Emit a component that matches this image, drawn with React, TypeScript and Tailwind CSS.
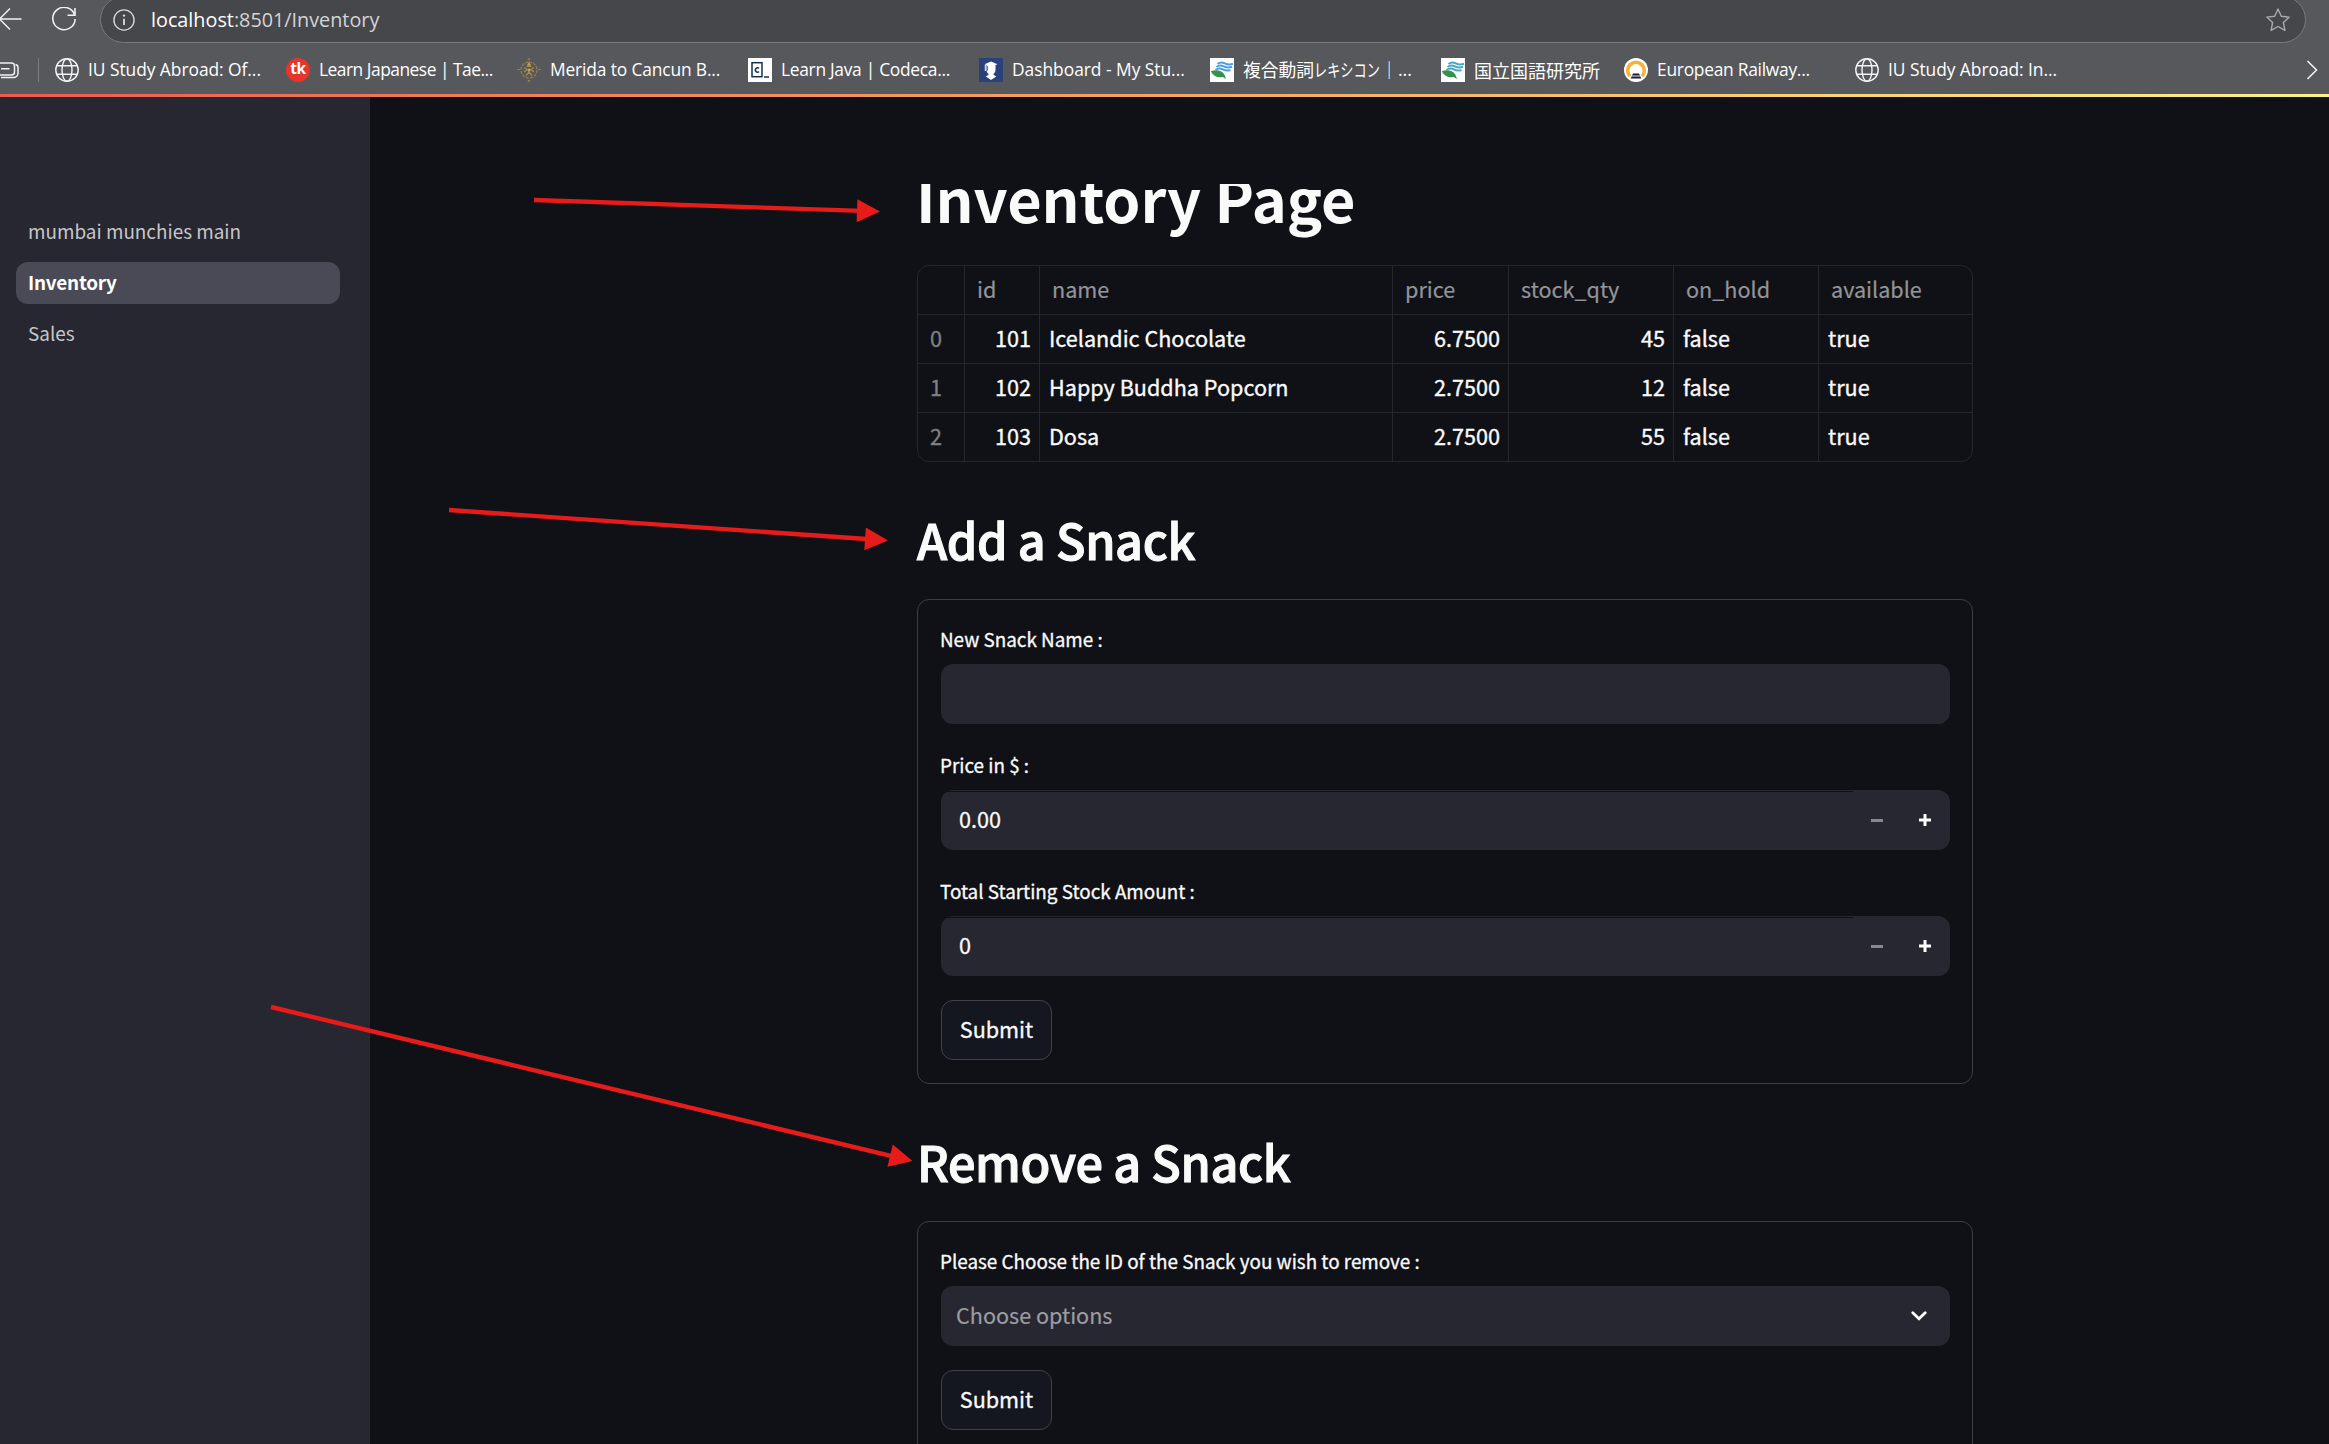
import type { ReactNode } from "react";

/* ---------- Browser chrome ---------- */

function GlobeIcon() {
  return (
    <svg viewBox="0 0 24 24" className="size-6 shrink-0" fill="none" stroke="#f4f4f5" strokeWidth="1.4">
      <circle cx="12" cy="12" r="11.2" />
      <ellipse cx="12" cy="12" rx="5" ry="11.2" />
      <path d="M2 7.8h20M2 16.2h20" />
    </svg>
  );
}

function TaeKimIcon() {
  return (
    <div className="flex size-6 shrink-0 items-center justify-center rounded-full bg-[#e8352b] pb-[2px] font-['Open_Sans',sans-serif] text-[15.5px] leading-none font-bold tracking-tight text-white">
      tk
    </div>
  );
}

function CompassIcon() {
  return (
    <svg viewBox="0 0 24 24" className="size-6 shrink-0" fill="none" stroke="#a98a45" strokeWidth="1.2">
      <circle cx="12" cy="12" r="8" strokeDasharray="3 1.2" opacity="0.8" />
      <path d="M12 4.5l1.8 4h-3.600zM9 11.500h6M7 9.500l3 2-3 2.500M17 9.500l-3 2 3 2.500M12 11v3M9 17.500l3-3.500 3 3.500" />
      <circle cx="12" cy="6.500" r="1.300" fill="#c9a24a" stroke="none" />
      <circle cx="12" cy="12" r="1.500" fill="#c9a24a" stroke="none" />
      <path d="M10.800 1.200h2.400M10.800 22.800h2.400M.6 11.500h2M21.400 11.500h2" />
    </svg>
  );
}

function CodecademyIcon() {
  return (
    <svg viewBox="0 0 24 24" className="size-6 shrink-0">
      <rect width="24" height="24" fill="#fff" />
      <rect x="4" y="4.700" width="10" height="14" fill="none" stroke="#14304a" strokeWidth="1.500" />
      <path d="M11 10.300a2.200 2.200 0 1 0 0 3.400" fill="none" stroke="#14304a" strokeWidth="1.500" />
      <path d="M16 19h5" stroke="#14304a" strokeWidth="1.500" />
    </svg>
  );
}

function GraduateIcon() {
  return (
    <svg viewBox="0 0 24 24" className="size-6 shrink-0">
      <rect width="24" height="24" fill="#2a427c" />
      <path d="M5.500 6.200L12 3.500l6.500 2.700-2 .8v4.500c0 2.500-1.200 3.800-2 4.300v1l2.700 1.800L12 22l-5.200-3.400 2.700-1.800v-1c-.8-.5-2-1.800-2-4.300V7z" fill="#fff" />
      <path d="M6.300 7v6" stroke="#fff" strokeWidth="1" />
      <path d="M8.600 8v4.500" stroke="#2a427c" strokeWidth=".8" />
    </svg>
  );
}

function LeafWaveIcon({ wave }: { wave: string }) {
  return (
    <svg viewBox="0 0 24 24" className="size-6 shrink-0">
      <rect width="24" height="24" fill="#fff" />
      <g fill="none" stroke={wave} strokeWidth="2">
        <path d="M7.500 6c3-2.500 5-1.800 7.300-.6S20 7 23 5.800" />
        <path d="M6.500 9c3-2.500 5-1.800 7.300-.6S19 10 22 8.800" />
        <path d="M5.500 12c3-2.500 5-1.800 7.300-.6S18 13 20.500 12" />
      </g>
      <path d="M.8 13.200c5-1.800 11-1 13.500 3.300.8 1.400 1.300 3 1.600 4.800-1-1.200-2-2-3-2.400C8 20 3.500 18.500.8 13.200z" fill="#36914a" />
    </svg>
  );
}

function RailwayIcon() {
  return (
    <svg viewBox="0 0 24 24" className="size-6 shrink-0">
      <circle cx="12" cy="12" r="12" fill="#fff" />
      <path d="M6 18.300a8.300 8.300 0 1 1 12 0" fill="none" stroke="#f2b43a" strokeWidth="3.600" />
      <path d="M9 15.500h6l2.300 5H6.700z" fill="#1d1b3a" />
      <path d="M7.500 18h9" stroke="#fff" strokeWidth=".9" />
    </svg>
  );
}

function Bookmark({ icon, className, children }: { icon: ReactNode; className: string; children: ReactNode }) {
  return (
    <div className="flex shrink-0 items-center gap-[9px]">
      {icon}
      <span className={className}>{children}</span>
    </div>
  );
}

function BrowserChrome() {
  return (
    <header className="h-[94px] shrink-0 overflow-hidden bg-[#57585c] font-['Open_Sans',sans-serif] text-white">
      <div className="-mt-1 flex h-12 items-start">
        <svg viewBox="0 0 24 24" className="mt-[11px] -ml-[2px] size-6 shrink-0" fill="none" stroke="#f0f0f1" strokeWidth="1.500">
          <path d="M23.500 12H1.500M12 1.500L1.500 12 12 22.500" />
        </svg>
        <svg viewBox="0 0 24 24" className="mt-[11px] ml-[30px] size-6 shrink-0" fill="none" stroke="#f0f0f1" strokeWidth="1.600">
          <path d="M22.800 8.500A11.200 11.200 0 1 0 23.200 12M23 1v7.300h-7.500" />
        </svg>
        <div className="ml-6 flex h-[47px] w-[2206px] items-center rounded-full border border-[#797a7e] bg-[#46474a] pl-[12px] pr-[15px]">
          <svg viewBox="0 0 24 24" className="size-[22px] shrink-0" fill="none" stroke="#d9d9da" strokeWidth="1.500">
            <circle cx="12" cy="12" r="11" />
            <path d="M12 10.500v7" strokeWidth="2" />
            <circle cx="12" cy="7.200" r="1.300" fill="#d9d9da" stroke="none" />
          </svg>
          <span className="ml-4 text-[19.800px] leading-none text-[#d4d4d6]">
            <span className="text-white">localhost</span>:8501/Inventory
          </span>
          <svg viewBox="0 0 24 24" className="ml-auto size-6" fill="none" stroke="#a8a9ac" strokeWidth="1.400" strokeLinejoin="round">
            <path d="M12 1l3.300 7.200 7.900.9-5.800 5.400 1.500 7.900L12 18.500l-6.900 3.900 1.500-7.900L.8 9.100l7.900-.9z" />
          </svg>
        </div>
      </div>
      <div className="flex h-13 items-center">
        <svg viewBox="0 0 20 20" className="size-5 shrink-0" fill="none" stroke="#f0f0f1" strokeWidth="1.500">
          <path d="M-4 3h15.500a3 3 0 0 1 3 3v6a3 3 0 0 1-3 3H-4M1 8.800h8.500" />
          <path d="M15.500 4.500a3 3 0 0 1 2.500 3V13a4.500 4.500 0 0 1-4.500 4.500H1" />
        </svg>
        <div className="ml-[18px] h-6 w-px bg-[#7b7c80]" />
        <div className="ml-4 grid flex-1 grid-cols-[231px_231px_231px_231px_231px_231px_183px_231px_231px] text-[17.400px] leading-none whitespace-nowrap">
          <Bookmark icon={<GlobeIcon />} className="tracking-[-0.050px]">IU Study Abroad: Of...</Bookmark>
          <Bookmark icon={<TaeKimIcon />} className="tracking-[-0.500px]">Learn Japanese | Tae...</Bookmark>
          <Bookmark icon={<CompassIcon />} className="tracking-[-0.150px]">Merida to Cancun B...</Bookmark>
          <Bookmark icon={<CodecademyIcon />} className="tracking-[-0.300px]">Learn Java | Codeca...</Bookmark>
          <Bookmark icon={<GraduateIcon />} className="tracking-[-0.030px]">Dashboard - My Stu...</Bookmark>
          <Bookmark icon={<LeafWaveIcon wave="#4a9fe6" />} className="flex items-center font-['Noto_Sans_CJK_JP',sans-serif] text-[17.800px]">
            複合動詞
            <span className="inline-block w-[66px] origin-left scale-x-[0.740]">レキシコン</span>
            ｜<span className="font-['Open_Sans',sans-serif]">...</span>
          </Bookmark>
          <Bookmark icon={<LeafWaveIcon wave="#45a8c4" />} className="font-['Noto_Sans_CJK_JP',sans-serif] text-[18px]">国立国語研究所</Bookmark>
          <Bookmark icon={<RailwayIcon />} className="tracking-[-0.270px]">European Railway...</Bookmark>
          <Bookmark icon={<GlobeIcon />} className="tracking-[-0.050px]">IU Study Abroad: In...</Bookmark>
        </div>
        <svg viewBox="0 0 12 20" className="mr-[11px] h-5 w-3 shrink-0" fill="none" stroke="#f0f0f1" strokeWidth="1.600">
          <path d="M1.500 1l9 9-9 9" />
        </svg>
      </div>
    </header>
  );
}

/* ---------- Sidebar ---------- */

function Sidebar() {
  return (
    <nav className="flex w-[370px] shrink-0 flex-col gap-[9px] bg-[#262730] px-4 pt-[114px] text-[18.900px] leading-none text-[#c6c6c9]">
      <a className="flex h-[42px] items-center px-3 pb-[2px]">mumbai munchies main</a>
      <a className="mr-[14px] flex h-[42px] items-center rounded-xl bg-[#494a55] px-3 pb-[2px] font-bold tracking-[-0.250px] text-white">
        Inventory
      </a>
      <a className="flex h-[42px] items-center px-3 pb-[2px]">Sales</a>
    </nav>
  );
}

/* ---------- Inventory table ---------- */

const columns = ["", "id", "name", "price", "stock_qty", "on_hold", "available"];
const snacks = [
  ["0", "101", "Icelandic Chocolate", "6.7500", "45", "false", "true"],
  ["1", "102", "Happy Buddha Popcorn", "2.7500", "12", "false", "true"],
  ["2", "103", "Dosa", "2.7500", "55", "false", "true"],
];
const numeric = new Set([1, 3, 4]);

function InventoryTable() {
  return (
    <div className="h-[197px] overflow-hidden rounded-xl border border-[#26272c] text-[21.600px] leading-none">
      <div className="grid h-[49px] grid-cols-[47px_75px_353px_116px_165px_145px_153px] border-b border-[#26272c] text-[#939498] [-webkit-text-stroke:0.2px_currentColor]">
        {columns.map((c, i) => (
          <div key={i} className="flex items-center border-r border-[#26272c] pb-[2px] pl-3 last:border-r-0">
            {c}
          </div>
        ))}
      </div>
      {snacks.map((row) => (
        <div key={row[0]} className="grid h-[49px] grid-cols-[47px_75px_353px_116px_165px_145px_153px] border-b border-[#26272c]">
          {row.map((v, i) => (
            <div
              key={i}
              className={
                "flex items-center border-r border-[#26272c] pb-[2px] last:border-r-0 [-webkit-text-stroke:0.35px_currentColor] " +
                (i === 0 ? "pl-3 text-[#7f8084]" : numeric.has(i) ? "justify-end pr-[8px] text-[#fafafa]" : "pl-[9px] text-[#fafafa]")
              }
            >
              {v}
            </div>
          ))}
        </div>
      ))}
    </div>
  );
}

/* ---------- Form pieces ---------- */

function Label({ children }: { children: ReactNode }) {
  return (
    <label className="-ml-px block h-[42px] text-[18.850px] leading-[33px] text-[#fafafa] [-webkit-text-stroke:0.3px_currentColor]">
      {children}
    </label>
  );
}

function NumberField({ label, value }: { label: string; value: string }) {
  return (
    <div>
      <Label>{label}</Label>
      <div className="flex h-[60px] overflow-hidden rounded-xl bg-[#262730]">
        <div className="flex w-[912px] flex-col pt-px">
          <div className="h-px bg-[#101116]" />
          <div className="flex flex-1 items-center pb-1 pl-[18px] text-[21.600px] leading-none [-webkit-text-stroke:0.3px_currentColor]">
            {value}
          </div>
        </div>
        <div className="flex w-12 items-center justify-center">
          <div className="h-[3px] w-3 bg-[#858795]" />
        </div>
        <div className="flex w-12 items-center justify-center">
          <svg viewBox="0 0 12 12" className="size-3" stroke="#fff" strokeWidth="3">
            <path d="M0 6h12M6 0v12" />
          </svg>
        </div>
      </div>
    </div>
  );
}

function SubmitButton() {
  return (
    <button className="flex h-[60px] w-[111px] items-center justify-center rounded-xl border border-[#42434a] bg-[#141720] pb-[2px] text-[21.600px] leading-none text-[#fafafa] [-webkit-text-stroke:0.3px_currentColor]">
      Submit
    </button>
  );
}

function SectionHeading({ children }: { children: ReactNode }) {
  return (
    <h2 className="h-[137px] pt-[47px] text-[48.600px] leading-[60px] font-medium tracking-[-0.380px] text-[#fafafa] [-webkit-text-stroke:1.1px_#fafafa]">
      {children}
    </h2>
  );
}

/* ---------- Annotation arrows ---------- */

const arrows = [
  { x1: 534, y1: 200, x2: 880, y2: 211.5 },
  { x1: 449, y1: 510, x2: 888, y2: 540.5 },
  { x1: 271, y1: 1007, x2: 912.5, y2: 1161 },
];

function Arrows() {
  return (
    <svg viewBox="0 0 2329 1444" className="pointer-events-none absolute inset-0 h-full w-full">
      {arrows.map((a) => {
        const length = Math.hypot(a.x2 - a.x1, a.y2 - a.y1);
        const angle = (Math.atan2(a.y2 - a.y1, a.x2 - a.x1) * 180) / Math.PI;
        return (
          <g key={a.y1} transform={`translate(${a.x1} ${a.y1}) rotate(${angle})`} fill="#e81b1b">
            <rect x="0" y="-2.200" width={length - 18} height="4.400" />
            <polygon points={`${length},0 ${length - 23},-11.400 ${length - 23},11.400`} />
          </g>
        );
      })}
    </svg>
  );
}

export default function App() {
  return (
    <div className="relative flex h-[1444px] w-[2329px] flex-col overflow-hidden bg-[#101116] font-['Noto_Sans_CJK_JP',sans-serif] text-[#fafafa]">
      <BrowserChrome />
      <div className="h-[3px] shrink-0 bg-linear-to-r from-[#ee5a50] via-[#f3a566] to-[#fbf285]" />
      <div className="flex min-h-0 flex-1">
        <Sidebar />
        <main className="flex-1 overflow-hidden pt-[87px] pl-[547px]">
          <div className="w-[1056px]">
            <div className="h-[81px] overflow-hidden">
              <h1 className="-mt-[17px] -ml-px text-[59.400px] leading-[60px] font-bold tracking-[-0.080px]">Inventory Page</h1>
            </div>
            <InventoryTable />

            <SectionHeading>Add a Snack</SectionHeading>
            <form className="flex flex-col gap-6 rounded-xl border border-[#3d3e43] pt-[22px] pr-[22px] pb-[23px] pl-[23px]">
              <div>
                <Label>New Snack Name :</Label>
                <div className="h-[60px] rounded-xl bg-[#262730]" />
              </div>
              <NumberField label="Price in $ :" value="0.00" />
              <NumberField label="Total Starting Stock Amount :" value="0" />
              <SubmitButton />
            </form>

            <SectionHeading>Remove a Snack</SectionHeading>
            <form className="flex h-[485px] flex-col gap-6 rounded-xl border border-[#3d3e43] pt-[22px] pr-[22px] pl-[23px]">
              <div>
                <Label>Please Choose the ID of the Snack you wish to remove :</Label>
                <div className="flex h-[60px] items-center justify-between rounded-xl bg-[#262730] pr-[23px] pb-[2px] pl-[15px] text-[21.600px] leading-none text-[#9c9da2] [-webkit-text-stroke:0.2px_currentColor]">
                  Choose options
                  <svg viewBox="0 0 16 10" className="mt-[2px] h-[10px] w-4" fill="none" stroke="#fff" strokeWidth="2.800" strokeLinecap="round">
                    <path d="M1.800 1.800L8 7.800l6.200-6" />
                  </svg>
                </div>
              </div>
              <SubmitButton />
            </form>
          </div>
        </main>
      </div>
      <Arrows />
    </div>
  );
}
